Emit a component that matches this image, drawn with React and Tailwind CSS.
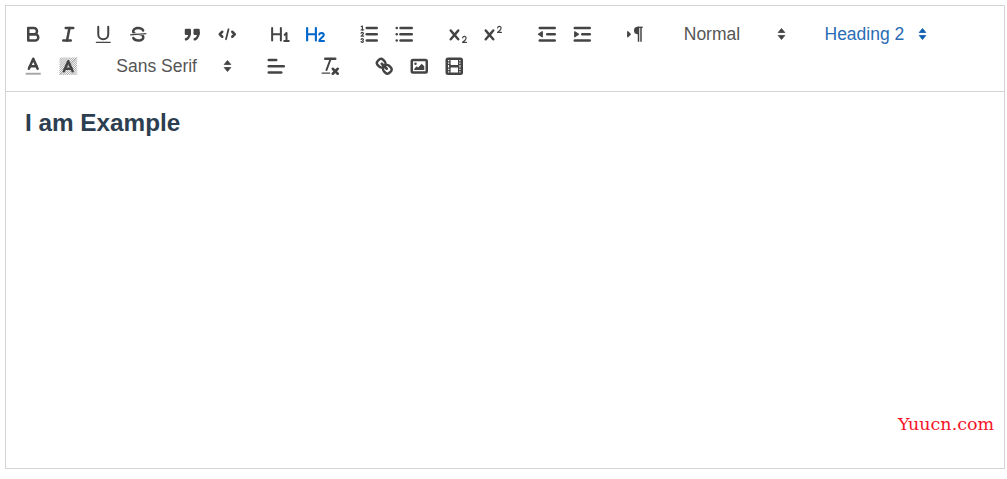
import React from 'react';

const Svg = ({ children }) => (
  <svg viewBox="0 0 18 18" className="w-[22.5px] h-[22.5px]" fill="none" stroke="currentColor" strokeWidth="2" strokeLinecap="round" strokeLinejoin="round">
    {children}
  </svg>
);

const Thin = (props) => <path strokeWidth="1" {...props} />;
const Fill = (props) => <path fill="currentColor" stroke="none" {...props} />;
const L = ({ a, b, c, d }) => <line x1={a} y1={b} x2={c} y2={d} />;

// diagonal hatch behind the background colour "A"
const hatch = [];
for (let i = 0; i < 15; i += 1.5) {
  hatch.push(`M${2 + i} 2L2 ${2 + i}`);
  hatch.push(`M16 ${2 + i}L${2 + i} 16`);
}

const icons = {
  bold: (
    <>
      <path d="M5,4H9.5A2.5,2.5,0,0,1,12,6.5v0A2.5,2.5,0,0,1,9.5,9H5V4Z" />
      <path d="M5,9h5.5A2.5,2.5,0,0,1,13,11.5v0A2.5,2.5,0,0,1,10.5,14H5V9Z" />
    </>
  ),
  italic: (
    <>
      <L a="7" b="4" c="13" d="4" />
      <L a="5" b="14" c="11" d="14" />
      <L a="8" b="14" c="10" d="4" />
    </>
  ),
  underline: (
    <>
      <path d="M5,3V9a4,4,0,0,0,4,4H9a4,4,0,0,0,4-4V3" strokeWidth="1.6" />
      <rect x="3" y="15" width="12" height="1" rx="0.5" fill="currentColor" stroke="none" />
    </>
  ),
  strike: (
    <>
      <line x1="15.5" y1="8.5" x2="2.5" y2="9.5" strokeWidth="1" strokeLinecap="butt" />
      <Fill d="M9.007,8C6.542,7.791,6,7.519,6,6.5,6,5.792,7.283,5,9,5c1.571,0,2.765.679,2.969,1.309a1,1,0,0,0,1.9-.617C13.356,4.106,11.354,3,9,3,6.2,3,4,4.538,4,6.5a3.2,3.2,0,0,0,.5,1.843Z" />
      <Fill d="M8.984,10C11.457,10.208,12,10.479,12,11.5c0,.708-1.283,1.5-3,1.5-1.571,0-2.765-.679-2.969-1.308a1,1,0,0,0-1.9.617C4.644,13.894,6.646,15,9,15c2.8,0,5-1.538,5-3.5a3.2,3.2,0,0,0-.5-1.843Z" />
    </>
  ),
  quote: (
    <>
      <rect x="4" y="5.5" width="3" height="3" fill="currentColor" />
      <rect x="11" y="5.5" width="3" height="3" fill="currentColor" />
      <path d="M7,8c0,4.031-3,5-3,5" />
      <path d="M14,8c0,4.031-3,5-3,5" />
    </>
  ),
  code: (
    <>
      <polyline points="5 7 3 9 5 11" />
      <polyline points="13 7 15 9 13 11" />
      <path d="M10,5L8,13" strokeWidth="1.4" />
    </>
  ),
  h1: (
    <>
      <path d="M2.5,4V14M9.5,4V14M2.5,9H9.5" strokeWidth="1.6" />
      <path d="M12.5,9.5L14,8V14.2M12.2,14.4H15.8" strokeWidth="1.6" />
    </>
  ),
  h2: (
    <>
      <path d="M2.5,4V14M9.5,4V14M2.5,9H9.5" strokeWidth="1.7" />
      <path d="M12.2,9.2C12.6,7.6,15.8,7.6,15.8,9.6C15.8,11.4,12.2,12.4,12.2,14.4H16" strokeWidth="1.6" />
    </>
  ),
  ol: (
    <>
      <L a="7" b="4" c="15" d="4" />
      <L a="7" b="9" c="15" d="9" />
      <L a="7" b="14" c="15" d="14" />
      <line x1="2.5" y1="5.5" x2="4.5" y2="5.5" strokeWidth="1" />
      <Fill d="M3.5,6A0.5,0.5,0,0,1,3,5.5V3.085l-0.276.138A0.5,0.5,0,0,1,2.053,3c-0.124-.247-0.023-0.324.224-0.447l1-.5A0.5,0.5,0,0,1,4,2.5v3A0.5,0.5,0,0,1,3.5,6Z" />
      <Thin d="M4.5,10.5h-2c0-.234,1.85-1.076,1.85-2.234A0.959,0.959,0,0,0,2.5,8.156" />
      <Thin d="M2.5,14.846a0.959,0.959,0,0,0,1.85-.109A0.7,0.7,0,0,0,3.75,14a0.688,0.688,0,0,0,.6-0.736,0.959,0.959,0,0,0-1.85-.109" />
    </>
  ),
  ul: (
    <>
      <L a="6" b="4" c="15" d="4" />
      <L a="6" b="9" c="15" d="9" />
      <L a="6" b="14" c="15" d="14" />
      <L a="3" b="4" c="3" d="4" />
      <L a="3" b="9" c="3" d="9" />
      <L a="3" b="14" c="3" d="14" />
    </>
  ),
  sub: (
    <>
      <Fill d="M15.5,15H13.861a3.858,3.858,0,0,0,1.914-2.975,1.8,1.8,0,0,0-1.6-1.751A1.921,1.921,0,0,0,12.021,11.7a0.50013,0.50013,0,1,0,.957.291h0a0.914,0.914,0,0,1,1.053-.725,0.81,0.81,0,0,1,.744.762c0,1.076-1.16971,1.86218-1.93971,2.37218A1.45124,1.45124,0,0,0,12,15.5a0.5,0.5,0,0,0,.5.5h3A0.5,0.5,0,0,0,15.5,15Z" />
      <Fill d="M9.65,5.241a1,1,0,0,0-1.409.108L6,7.964,3.759,5.349A1,1,0,0,0,2.192,6.59178Q2.2,6.6,2.241,6.651L4.684,9.5,2.241,12.35A1,1,0,0,0,3.759,13.651L6,11.036l2.241,2.616a1,1,0,0,0,1.519-1.3L7.316,9.5,9.759,6.651A1,1,0,0,0,9.65,5.241Z" />
    </>
  ),
  sup: (
    <>
      <Fill d="M15.5,7H13.861a4.015,4.015,0,0,0,1.914-2.975,1.8,1.8,0,0,0-1.6-1.751A1.922,1.922,0,0,0,12.021,3.7a0.5,0.5,0,1,0,.957.291,0.917,0.917,0,0,1,1.053-.725,0.81,0.81,0,0,1,.744.762c0,1.077-1.164,1.925-1.934,2.486A1.423,1.423,0,0,0,12,7.5a0.5,0.5,0,0,0,.5.5h3A0.5,0.5,0,0,0,15.5,7Z" />
      <Fill d="M9.651,5.241a1,1,0,0,0-1.41.108L6,7.964,3.759,5.349a1,1,0,1,0-1.519,1.3L4.683,9.5,2.241,12.35a1,1,0,1,0,1.519,1.3L6,11.036l2.241,2.616a1,1,0,0,0,1.519-1.3L7.317,9.5,9.759,6.651A1,1,0,0,0,9.651,5.241Z" />
    </>
  ),
  outdent: (
    <>
      <L a="3" b="14" c="15" d="14" />
      <L a="3" b="4" c="15" d="4" />
      <L a="9" b="9" c="15" d="9" />
      <polygon points="5 7 5 11 2 9" fill="currentColor" strokeWidth="1" />
    </>
  ),
  indent: (
    <>
      <L a="3" b="14" c="15" d="14" />
      <L a="3" b="4" c="15" d="4" />
      <L a="9" b="9" c="15" d="9" />
      <polygon points="3 11 3 7 6 9" fill="currentColor" strokeWidth="1" />
    </>
  ),
  direction: (
    <>
      <polygon points="3 11 5 9 3 7 3 11" fill="currentColor" strokeWidth="1" />
      <Fill d="M11,3a3,3,0,0,0,0,6h1V3H11Z" />
      <rect x="11" y="3" width="1.2" height="12" fill="currentColor" stroke="none" />
      <rect x="13" y="3" width="1.2" height="12" fill="currentColor" stroke="none" />
      <rect x="11" y="3" width="4" height="1" fill="currentColor" stroke="none" />
    </>
  ),
  color: (
    <>
      <line x1="3" y1="15" x2="15" y2="15" strokeWidth="1.6" strokeLinecap="butt" stroke="#a8a8a8" />
      <polyline points="5.5 11 9 3 12.5 11" />
      <L a="11.63" b="9" c="6.38" d="9" />
    </>
  ),
  background: (
    <>
      <path d={hatch.join('')} strokeWidth="0.5" strokeLinecap="butt" stroke="#777777" />
      <polyline points="5.5 13 9 5 12.5 13" />
      <L a="11.63" b="11" c="6.38" d="11" />
    </>
  ),
  align: (
    <>
      <L a="3" b="9" c="15" d="9" />
      <L a="3" b="14" c="13" d="14" />
      <L a="3" b="4" c="9" d="4" />
    </>
  ),
  clean: (
    <>
      <L a="5" b="3" c="13" d="3" />
      <path d="M6,12L9.35,3" strokeWidth="1.6" />
      <L a="11" b="11" c="15" d="15" />
      <L a="15" b="11" c="11" d="15" />
      <rect x="2" y="14" width="7" height="1" rx="0.5" fill="currentColor" stroke="none" />
    </>
  ),
  link: (
    <>
      <L a="7" b="7" c="11" d="11" />
      <path d="M8.9,4.577a3.476,3.476,0,0,1,.36,4.679A3.476,3.476,0,0,1,4.577,8.9C3.185,7.5,2.035,6.4,4.217,4.217S7.5,3.185,8.9,4.577Z" />
      <path d="M13.423,9.1a3.476,3.476,0,0,0-4.679-.36,3.476,3.476,0,0,0,.36,4.679c1.392,1.392,2.5,2.542,4.679.36S14.815,10.5,13.423,9.1Z" />
    </>
  ),
  image: (
    <>
      <rect x="3" y="4" width="12" height="10" rx="1" />
      <circle cx="6" cy="7" r="1" fill="currentColor" stroke="none" />
      <polygon points="5 12 5 11 7 9 8 10 11 7 13 9 13 12 5 12" fill="currentColor" stroke="none" />
    </>
  ),
  video: (
    <>
      <rect x="3" y="3" width="12" height="12" rx="1" />
      <rect x="5" y="3" width="1" height="12" fill="currentColor" stroke="none" />
      <rect x="12" y="3" width="1" height="12" fill="currentColor" stroke="none" />
      <rect x="5" y="8" width="8" height="2" fill="currentColor" stroke="none" />
      <rect x="3" y="5" width="3" height="1" fill="currentColor" stroke="none" />
      <rect x="3" y="7" width="3" height="1" fill="currentColor" stroke="none" />
      <rect x="3" y="10" width="3" height="1" fill="currentColor" stroke="none" />
      <rect x="3" y="12" width="3" height="1" fill="currentColor" stroke="none" />
      <rect x="12" y="5" width="3" height="1" fill="currentColor" stroke="none" />
      <rect x="12" y="7" width="3" height="1" fill="currentColor" stroke="none" />
      <rect x="12" y="10" width="3" height="1" fill="currentColor" stroke="none" />
      <rect x="12" y="12" width="3" height="1" fill="currentColor" stroke="none" />
    </>
  ),
};

const ToolButton = ({ name, active }) => (
  <button type="button" className={`w-[35px] h-[32px] flex items-center justify-center ${active ? 'text-[#0066cc]' : 'text-[#444444]'}`}>
    <Svg>{icons[name]}</Svg>
  </button>
);

const Group = ({ names, active }) => (
  <div className="flex mr-[18.75px]">
    {names.map((name) => (
      <ToolButton key={name} name={name} active={name === active} />
    ))}
  </div>
);

const Picker = ({ label, width, active }) => (
  <div className={`${width} h-[32px] mr-[18.75px] pl-3 pr-2 flex items-center justify-between text-[17.5px] ${active ? 'text-[#2a6cb4]' : 'text-[#555555]'}`}>
    <span>{label}</span>
    <svg viewBox="0 0 9 14" className={`w-[9px] h-3.5 ${active ? 'text-[#0f5fb0]' : 'text-[#444444]'}`} fill="currentColor" stroke="currentColor" strokeWidth="0.8" strokeLinejoin="round">
      <path d="M4.5 1.5L7.8 5.5H1.2Z" />
      <path d="M4.5 12.5L1.2 8.5H7.8Z" />
    </svg>
  </div>
);

const App = () => {
  return (
    <div className="w-[1007px] h-[479px] bg-white pt-[5px] pl-[5px] font-['Liberation_Sans',Arial,sans-serif] relative overflow-hidden">
      <div className="w-[1000px] h-[464px] border border-[#d4d4d4] flex flex-col">
        {/* Toolbar */}
        <div className="flex flex-wrap content-start h-[86px] pt-3 pl-[9.5px] border-b border-[#d4d4d4]">
          <Group names={['bold', 'italic', 'underline', 'strike']} />
          <Group names={['quote', 'code']} />
          <Group names={['h1', 'h2']} active="h2" />
          <Group names={['ol', 'ul']} />
          <Group names={['sub', 'sup']} />
          <Group names={['outdent', 'indent']} />
          <Group names={['direction']} />
          <Picker label="Normal" width="w-[122px]" />
          <Picker label="Heading 2" width="w-[122px]" active />
          <Group names={['color', 'background']} />
          <Picker label="Sans Serif" width="w-[136px]" />
          <Group names={['align']} />
          <Group names={['clean']} />
          <Group names={['link', 'image', 'video']} />
        </div>

        {/* Editor */}
        <div className="flex-1 pl-[19px] pt-[15px]">
          <h2 className="text-[24.3px] leading-[32px] font-bold text-[#2c3e50]">I am Example</h2>
        </div>
      </div>

      {/* Watermark */}
      <span className="absolute left-[898px] top-[414px] text-[17.5px] leading-[20px] text-[#f5142a] font-['DejaVu_Serif',serif]">
        Yuucn.com
      </span>
    </div>
  );
};

export default App;
